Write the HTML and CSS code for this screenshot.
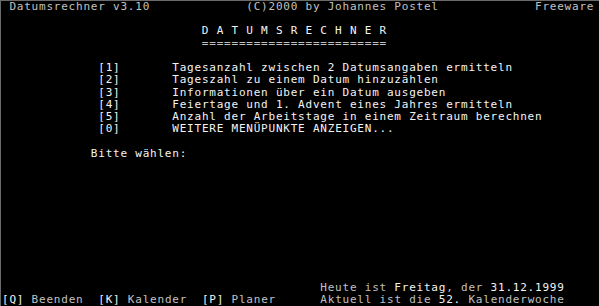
FILE: index.html
```html
<!DOCTYPE html>
<html lang="de">
<head>
<meta charset="utf-8">
<title>Datumsrechner v3.10</title>
<link rel="stylesheet" href="styles.css">
</head>
<body>
<div class="screen">
  <div class="row"> Datumsrechner v3.10             (C)2000 by Johannes Postel             Freeware</div>
  <div class="title">
    <div class="row hi">                           D A T U M S R E C H N E R</div>
    <div class="row">                           =========================</div>
  </div>
  <div class="menu">
    <div class="row">             <span class="hi">[1]</span>       <span class="hi">Tagesanzahl zwischen 2 Datumsangaben ermitteln</span></div>
    <div class="row">             <span class="hi">[2]</span>       <span class="hi">Tageszahl zu einem Datum hinzuzählen</span></div>
    <div class="row">             <span class="hi">[3]</span>       <span class="hi">Informationen über ein Datum ausgeben</span></div>
    <div class="row">             <span class="hi">[4]</span>       <span class="hi">Feiertage und 1. Advent eines Jahres ermitteln</span></div>
    <div class="row">             <span class="hi">[5]</span>       <span class="hi">Anzahl der Arbeitstage in einem Zeitraum berechnen</span></div>
    <div class="row">             <span class="hi">[0]</span>       <span class="hi">WEITERE MENÜPUNKTE ANZEIGEN...</span></div>
  </div>
  <div class="prompt">
    <div class="row hi">            Bitte wählen:</div>
  </div>
  <div class="footer">
    <div class="row">                                           Heute ist <span class="hi">Freitag</span>, der <span class="hi">31.12.1999</span></div>
    <div class="row"><span class="hi">[Q]</span> Beenden  <span class="hi">[K]</span> Kalender  <span class="hi">[P]</span> Planer      Aktuell ist die <span class="hi">52.</span> Kalenderwoche</div>
  </div>
</div>
</body>
</html>
```
FILE: styles.css
```css
html, body {
  margin: 0;
  padding: 0;
  background: #000;
}

.screen {
  --row: 12.24px;
  box-sizing: border-box;
  width: 599px;
  height: 306px;
  background: #000;
  border-top: 1px solid #6a6a6a;
  border-left: 1px solid #6a6a6a;
  padding-left: 1px;
  display: flex;
  flex-direction: column;
  color: #c0c0c0;
  font-family: "DejaVu Sans Mono", "Liberation Mono", monospace;
  font-size: 11px;
  letter-spacing: 0.78px;
  overflow: hidden;
}

.row {
  height: var(--row);
  line-height: var(--row);
  white-space: pre;
}

.hi {
  color: #f4f4f4;
}

.title {
  margin-top: var(--row);
}

.menu {
  margin-top: var(--row);
}

.prompt {
  margin-top: var(--row);
}

.footer {
  margin-top: auto;
}
```
